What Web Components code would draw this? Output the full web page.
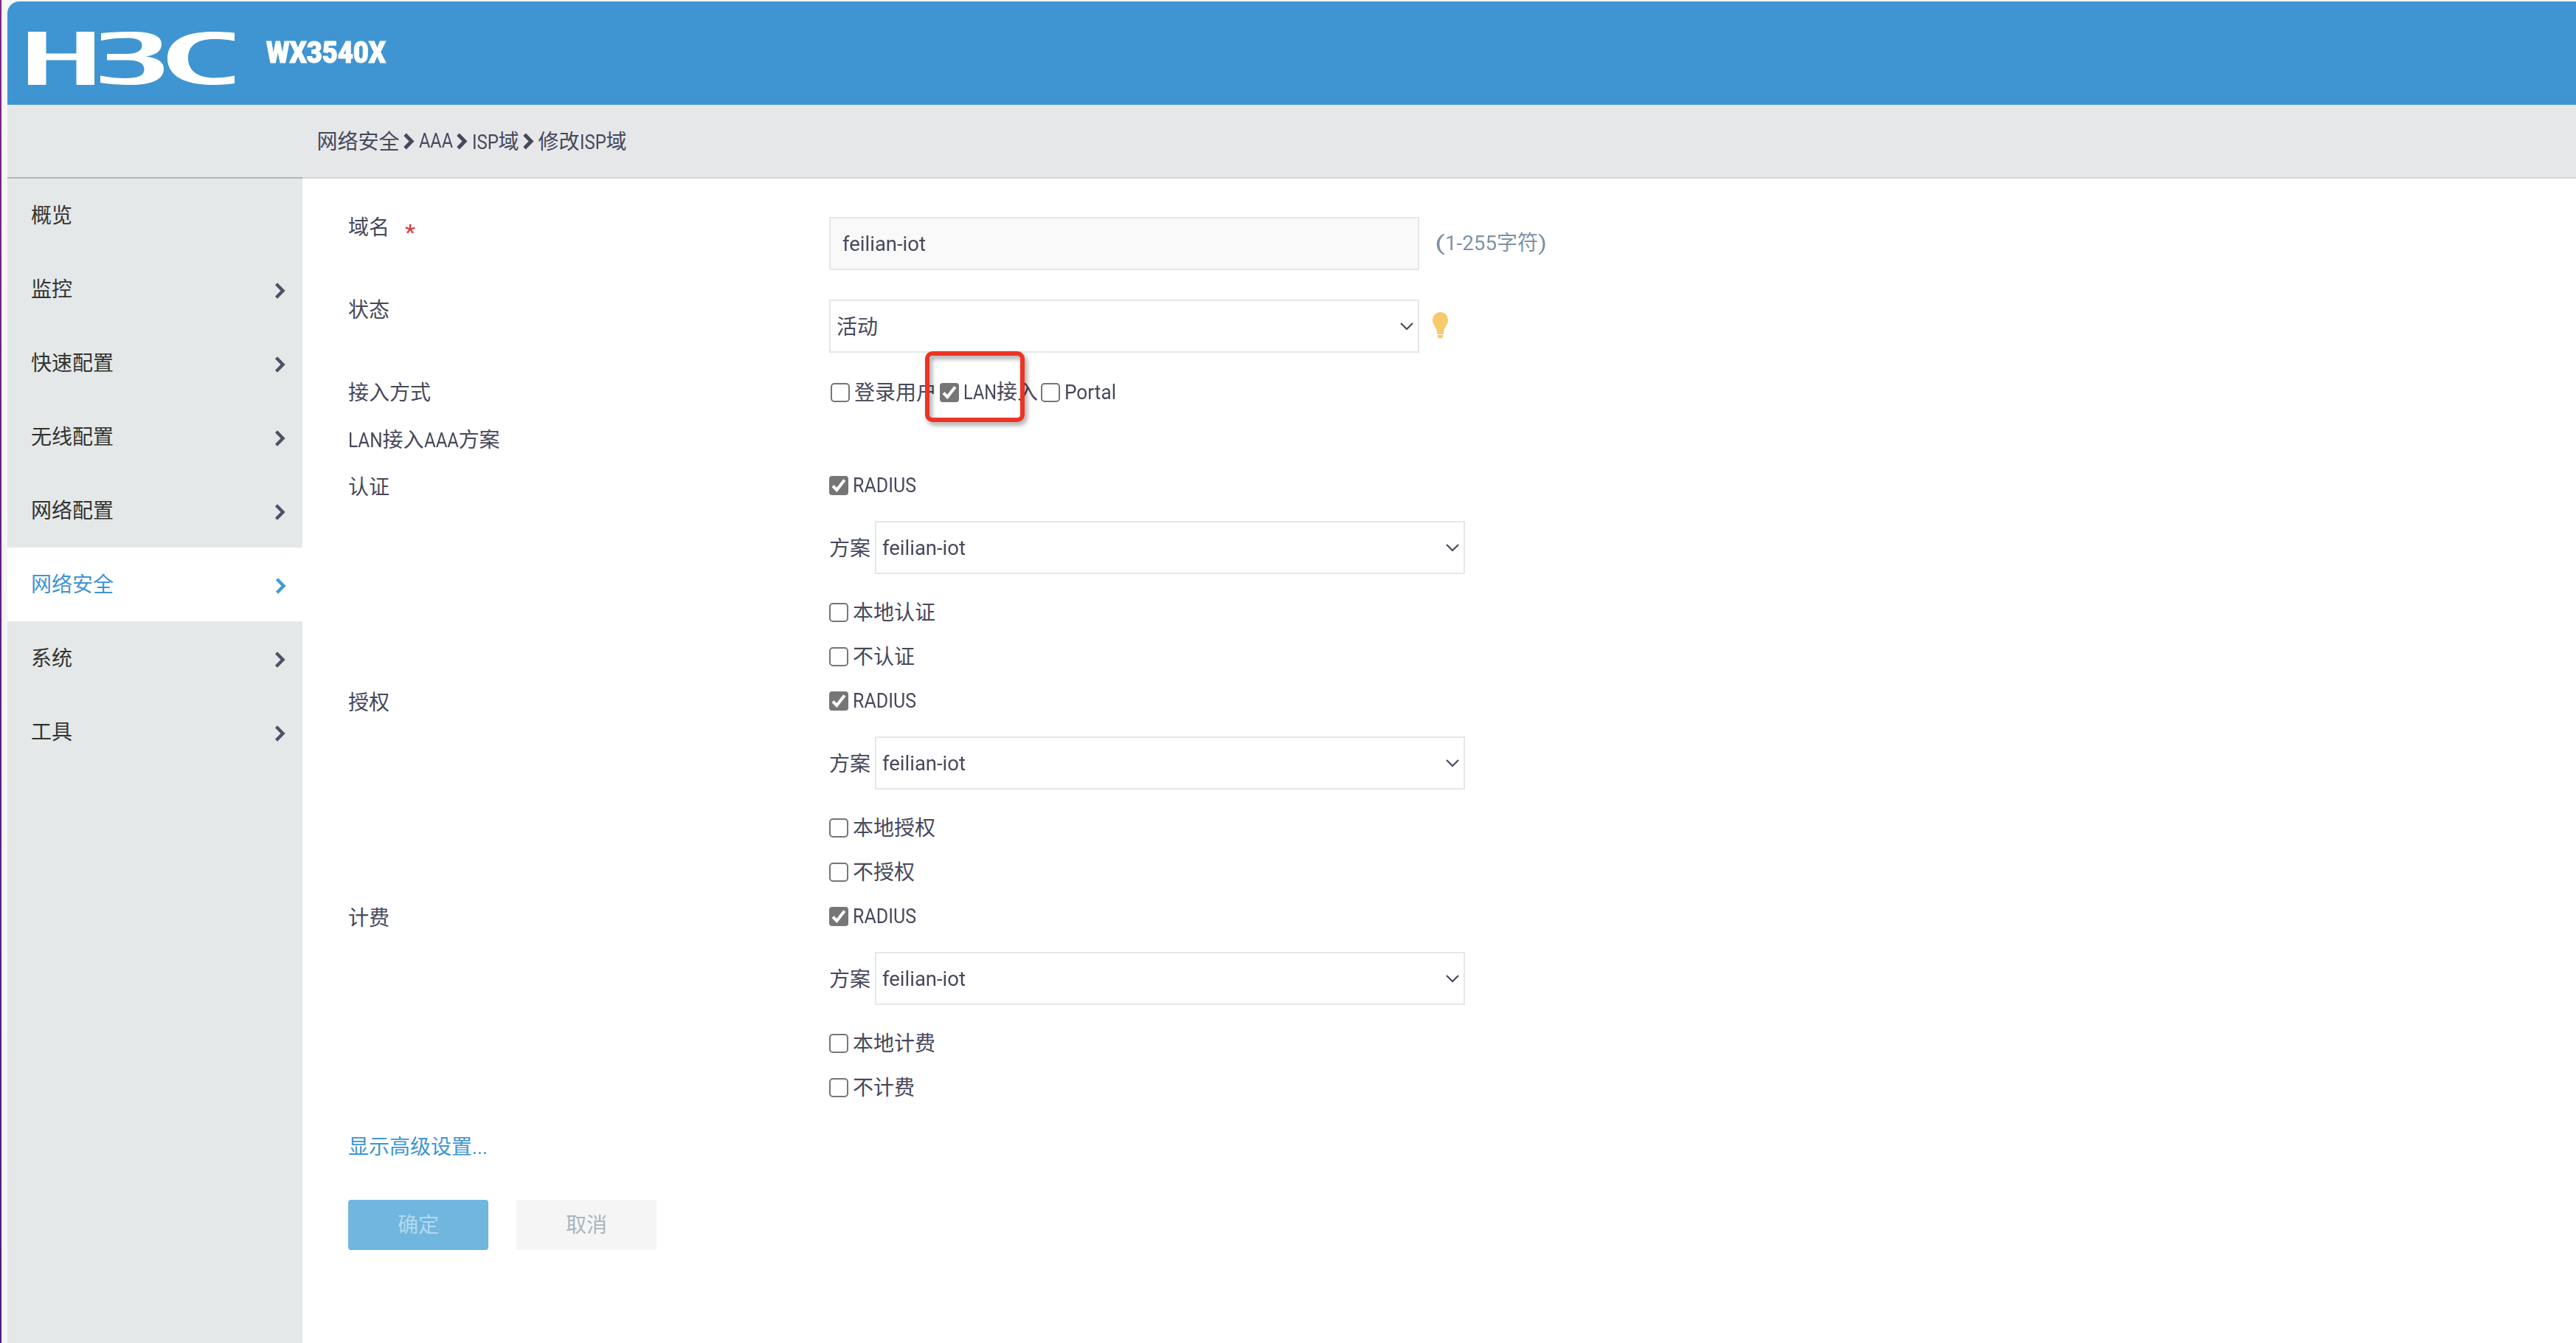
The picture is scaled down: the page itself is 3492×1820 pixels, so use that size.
<!DOCTYPE html>
<html lang="zh-CN">
<head>
<meta charset="utf-8">
<title>WX3540X</title>
<style>
html,body{margin:0;height:100%}
body{font:28px/60px "Noto Sans CJK SC","Roboto",sans-serif;color:#47485b;background:#fff;overflow:hidden}
</style>
</head>
<body>
<h3c-app></h3c-app>
<script>
const define=(name,html,setup)=>customElements.define(name,class extends HTMLElement{
  constructor(){super();this.attachShadow({mode:'open'}).innerHTML=html}
  connectedCallback(){if(setup)setup(this,this.shadowRoot)}
});

/* Latin run set to a fixed advance width */
define('latin-run',`<style>
:host{display:inline-block;white-space:nowrap;font-family:Roboto,sans-serif;font-size:27px}
span{display:inline-block;transform-origin:0 50%}
</style><span><slot></slot></span>`,(el,root)=>{
  const s=root.querySelector('span');
  const w=+el.getAttribute('w');
  s.style.transform='none';
  el.style.width='auto';
  const n=s.getBoundingClientRect().width;
  el.style.width=w+'px';
  if(n)s.style.transform=`scaleX(${w/n})`;
});

define('h3c-logo',`<style>:host{display:block;width:280px;height:72px}svg{display:block}</style>
<svg width="280" height="72" viewBox="0 0 280 72" fill="#fff">
<path d="M0 0H24.500V29.500H65.500V0H90V72H65.500V38.500H24.500V72H0Z"/>
<path d="M99 2C112 .5 126 0 142 0C166 0 181 5 181 16.500C181 26 174 31.500 160 33.500C176 35.500 184 41 184 50.500C184 65 167 72 139 72C123 72 109 71 98 69V59.500C110 62 121 63 132 63C149 63 157.500 59.500 157.500 51C157.500 42.500 149 38.500 135 38.500H107V30H134C147 30 154.500 26 154.500 18.500C154.500 11 147 8.500 133 8.500C121 8.500 110 9.500 99 12Z"/>
<path d="M280 1.500V12.500C270 10.500 261 10 252 10C229 10 217 19 217 35.500C217 53 230 62.500 253 62.500C262 62.500 271 61.500 280 59.500V70C270 71.500 260 72 250 72C211 72 189 59 189 36C189 13 211 0 251 0C261 0 271 .5 280 1.500Z"/>
</svg>`);

define('crumb-arrow',`<style>:host{display:flex;align-items:center;justify-content:center;width:26px}svg{display:block}</style>
<svg width="15" height="23" viewBox="0 0 15 23" fill="none" stroke="#47485b" stroke-width="5"><path d="M2 2.300L11 11.500L2 20.700"/></svg>`);

define('top-bar',`<style>
:host{display:flex;height:140px;background:#3f95d1;border-top-left-radius:16px;color:#fff;padding-left:28px}
h3c-logo{margin-top:41px}
b{margin:40px 0 0 43px;line-height:60px;height:60px}
latin-run{font-size:40px;font-weight:900;-webkit-text-stroke:1.2px #fff}
</style><h3c-logo></h3c-logo><b><latin-run w="162">WX3540X</latin-run></b>`);

define('crumb-bar',`<style>
:host{display:flex;height:98px;background:linear-gradient(90deg,#e4e8e8 400px,#e5e7e9 400px)}
nav{display:flex;padding:0 0 2px 419.500px;line-height:96px;height:96px;white-space:nowrap}
crumb-arrow{padding-top:2px}
nav>latin-run{padding-top:1px}
</style><nav><span>网络安全</span><crumb-arrow></crumb-arrow><latin-run w="46">AAA</latin-run><crumb-arrow></crumb-arrow><span><latin-run w="36">ISP</latin-run>域</span><crumb-arrow></crumb-arrow><span>修改<latin-run w="36">ISP</latin-run>域</span></nav>`);

define('menu-item',`<style>
:host{display:flex;justify-content:space-between;align-items:center;height:100px;padding:0 23px 0 32px;color:#333;box-sizing:border-box;--arrow:#4f5063}
:host([active]){background:#fff;color:#3f95d1;--arrow:#3f9bd6;padding-right:22px}
span{padding-bottom:5px}
svg{display:block;margin-top:3px}
:host([leaf]) svg{display:none}
</style><span><slot></slot></span><svg width="15" height="22" viewBox="0 0 15 22" fill="none" stroke="var(--arrow)" stroke-width="4.400"><path d="M2.500 1.800L11.500 11L2.500 20.200"/></svg>`);

define('side-menu',`<style>:host{display:block;width:400px;background:#e4e8e8;flex:none}</style>
<menu-item leaf>概览</menu-item><menu-item>监控</menu-item><menu-item>快速配置</menu-item><menu-item>无线配置</menu-item><menu-item>网络配置</menu-item><menu-item active>网络安全</menu-item><menu-item>系统</menu-item><menu-item>工具</menu-item>`);

define('check-box',`<style>
:host{display:flex;align-items:center;height:60px;white-space:nowrap}
i{box-sizing:border-box;width:26px;height:26px;border:2px solid #767676;border-radius:5px;margin-right:6px;background:#fff;flex:none}
svg{display:none}
:host([checked]) i{background:#767676;border-radius:4px}
:host([checked]) svg{display:block;margin:-2px}
span{padding-bottom:4px}
</style><i><svg width="26" height="26" viewBox="0 0 26 26" fill="none" stroke="#fff" stroke-width="4"><path d="M5 13.500L10.300 19L20.800 5.500"/></svg></i><span><slot></slot></span>`);

define('text-box',`<style>
:host{display:flex;align-items:center;box-sizing:border-box;width:800px;height:72px;border:2px solid #e4e8e8;background:#f9f9f9;padding:2px 16px 0}
</style><slot></slot>`);

define('select-box',`<style>
:host{display:flex;align-items:center;justify-content:space-between;box-sizing:border-box;width:800px;height:72px;border:2px solid #e4e8e8;background:#fff;padding:0 6px 0 8px;flex:none}
span{padding-bottom:3px}
:host([latin]) span{padding-bottom:1px}
svg{display:block}
</style><span><slot></slot></span><svg width="18" height="11" viewBox="0 0 18 11" fill="none" stroke="#47485b" stroke-width="2.200"><path d="M1 1L9 9L17 1"/></svg>`);

define('tip-bulb',`<style>:host{display:block}svg{display:block}</style>
<svg width="21" height="36" viewBox="0 0 21 36" fill="#f7ca6e"><path d="M10.500 0C4.500 0 0 4.800 0 11C0 17.500 6 21 6 27V30H15V27C15 21 21 17.500 21 11C21 4.800 16.500 0 10.500 0Z"/><path d="M6.500 31H14.500C14.500 33.500 13 35.500 10.500 35.500C8 35.500 6.500 33.500 6.500 31Z"/></svg>`);

define('form-row',`<style>
:host{display:grid;grid-template-columns:653px auto;justify-content:start;align-items:start}
:host([tall]){height:112px}
:host([mid]){height:64px}
.l{padding-left:1px}
.c{display:flex;align-items:center}
:host([tall]) .c{margin-top:18px}
:host([mid]) .c{height:64px}
:host([group]) .c{display:block}
</style><div class="l"><slot name="label"></slot></div><div class="c"><slot></slot></div>`);

define('aaa-group',`<style>
:host{display:block;height:292px}
.s{display:flex;align-items:center;height:72px;padding:18px 0 22px}
.s>span{width:62px;padding-bottom:3px}
</style><check-box checked><latin-run w="86">RADIUS</latin-run></check-box>
<div class="s"><span>方案</span><select-box latin><latin-run w="113">feilian-iot</latin-run></select-box></div>
<check-box>本地<slot></slot></check-box><check-box>不<slot name="none"></slot></check-box>`,(el,root)=>{
  root.querySelector('slot[name=none]').textContent=el.getAttribute('kind');
  root.querySelector('slot:not([name])').textContent=el.getAttribute('kind');
});

define('push-button',`<style>
:host{display:flex;align-items:center;justify-content:center;width:190px;height:68px;border-radius:4px;background:#f5f5f5;color:#a9b5c0}
:host([primary]){background:#70b6df;color:#b3d9ee}
span{padding-bottom:5px}
</style><span><slot></slot></span>`);

define('focus-mark',`<style>
:host{position:absolute;left:130px;top:-26px;width:123px;height:84px;border:6px solid #ec3424;border-radius:10px;filter:drop-shadow(3px 4px 3px rgba(0,0,0,.38))}
</style>`);

define('domain-form',`<style>
:host{display:block;padding:34px 0 0 61px;flex:1}
.star{color:#d13b43;margin-left:21px}
.star latin-run{font-size:30px;font-weight:500;line-height:36px;vertical-align:-7px}
.hint{color:#8091a5;margin-left:21px;padding-bottom:3px;white-space:nowrap}
tip-bulb{margin:-2px 0 0 18px}
.ways{position:relative;display:flex;gap:4px;padding-left:2px}
.adv{color:#3f95d1;margin-top:18px;height:60px;padding-left:1px}
.btns{display:flex;gap:38px;margin:44px 0 0 1px}
</style>
<form-row tall><span slot="label">域名<span class="star"><latin-run w="14">*</latin-run></span></span><text-box><latin-run w="113">feilian-iot</latin-run></text-box><span class="hint"><latin-run w="14">(</latin-run><latin-run w="70">1-255</latin-run>字符<latin-run w="12">)</latin-run></span></form-row>
<form-row tall><span slot="label">状态</span><select-box>活动</select-box><tip-bulb></tip-bulb></form-row>
<form-row mid><span slot="label">接入方式</span><div class="ways"><check-box>登录用户</check-box><check-box checked><latin-run w="45">LAN</latin-run>接入</check-box><check-box><latin-run w="70">Portal</latin-run></check-box><focus-mark></focus-mark></div></form-row>
<form-row mid><span slot="label"><latin-run w="46.500">LAN</latin-run>接入<latin-run w="47">AAA</latin-run>方案</span></form-row>
<form-row group><span slot="label">认证</span><aaa-group kind="认证"></aaa-group></form-row>
<form-row group><span slot="label">授权</span><aaa-group kind="授权"></aaa-group></form-row>
<form-row group><span slot="label">计费</span><aaa-group kind="计费"></aaa-group></form-row>
<div class="adv">显示高级设置<latin-run w="21">...</latin-run></div>
<div class="btns"><push-button primary>确定</push-button><push-button>取消</push-button></div>`);

define('h3c-app',`<style>
:host{display:flex;height:100vh;background:#f6f6f6}
.edge{width:2px;flex:none;background:linear-gradient(#7d2684,#5c1c88 50%,#4b1c80)}
.page{display:flex;flex-direction:column;flex:1;margin:2px 0 0 8px;min-width:0}
.rule{height:2px;flex:none;background:linear-gradient(90deg,#b3b4b6 400px,#d4d5d7 400px)}
.body{display:flex;flex:1;background:#fff}
top-bar,crumb-bar{flex:none}
</style><div class="edge"></div><div class="page"><top-bar></top-bar><crumb-bar></crumb-bar><div class="rule"></div><div class="body"><side-menu></side-menu><domain-form></domain-form></div></div>`);
</script>
</body>
</html>
